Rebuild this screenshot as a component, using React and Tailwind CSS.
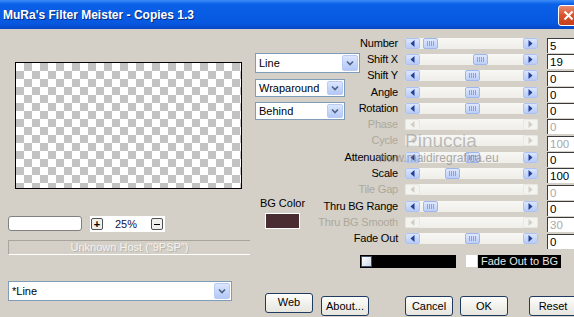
import React from 'react';

const rows = [
  { label: 'Number', value: '5', thumb: 18, row: 'row-start-1' },
  { label: 'Shift X', value: '19', thumb: 68, row: 'row-start-2' },
  { label: 'Shift Y', value: '0', thumb: 60, row: 'row-start-3' },
  { label: 'Angle', value: '0', thumb: 60, row: 'row-start-4' },
  { label: 'Rotation', value: '0', thumb: 60, row: 'row-start-5' },
  { label: 'Phase', value: '0', disabled: true, row: 'row-start-6' },
  { label: 'Cycle', value: '100', disabled: true, row: 'row-start-7' },
  { label: 'Attenuation', value: '0', thumb: 60, row: 'row-start-8' },
  { label: 'Scale', value: '100', thumb: 40, row: 'row-start-9' },
  { label: 'Tile Gap', value: '0', disabled: true, row: 'row-start-10' },
  { label: 'Thru BG Range', value: '0', thumb: 18, row: 'row-start-11' },
  { label: 'Thru BG Smooth', value: '30', disabled: true, row: 'row-start-12' },
  { label: 'Fade Out', value: '0', thumb: 60, row: 'row-start-13' },
];

const ArrowBtn = ({ dir, disabled }) => (
  <span
    className={`w-[15px] h-full rounded-[2px] border flex items-center justify-center ${
      disabled
        ? 'bg-[#f3f3ef] border-[#e8e7e1]'
        : 'bg-gradient-to-b from-[#dbe6fe] to-[#b7cbf7] border-[#aec3f1]'
    }`}
  >
    <svg width="5" height="7" viewBox="0 0 5 7">
      <path
        d={dir === 'left' ? 'M4.5 0 L0.5 3.5 L4.5 7 Z' : 'M0.5 0 L4.5 3.5 L0.5 7 Z'}
        fill={disabled ? '#cfcdc6' : '#243f94'}
      />
    </svg>
  </span>
);

const Slider = ({ thumb, disabled }) => (
  <div className="self-center h-[11px] flex bg-gradient-to-b from-[#f7f7f4] to-[#efeee9] rounded-[2px]">
    <ArrowBtn dir="left" disabled={disabled} />
    <div className="flex-1 flex">
      {!disabled && (
        <span
          className="w-[15px] h-full rounded-[2px] border border-[#9fb6ec] bg-gradient-to-b from-[#dfe8fe] to-[#bccff8] flex items-center justify-center gap-[1px]"
          style={{ marginLeft: thumb - 15 }}
        >
          <span className="w-[1px] h-[5px] bg-[#8aa1dd]" />
          <span className="w-[1px] h-[5px] bg-[#8aa1dd]" />
          <span className="w-[1px] h-[5px] bg-[#8aa1dd]" />
          <span className="w-[1px] h-[5px] bg-[#8aa1dd]" />
        </span>
      )}
    </div>
    <ArrowBtn dir="right" disabled={disabled} />
  </div>
);

const Dropdown = ({ text, className }) => (
  <div className={`flex items-center bg-white border border-[#7f9db9] ${className}`}>
    <span className="flex-1 pl-[3px] text-[11px] leading-none text-black">{text}</span>
    <span className="w-[16px] self-stretch m-[1px] rounded-[2px] bg-gradient-to-b from-[#dce6fe] to-[#b3c8f6] border border-[#b8cbf4] flex items-center justify-center">
      <svg width="8" height="6" viewBox="0 0 8 6">
        <path d="M1 1.5 L4 4.5 L7 1.5" fill="none" stroke="#4d6185" strokeWidth="1.6" />
      </svg>
    </span>
  </div>
);

const Button = ({ children }) => (
  <button className="w-[48px] h-[20px] rounded-[3px] border border-[#1f3b5f] bg-gradient-to-b from-[#fdfdfb] to-[#e6e5de] text-[11px] leading-none text-black">
    {children}
  </button>
);

export default function App() {
  return (
    <div className="relative w-[574px] h-[317px] overflow-hidden bg-[#d4d0c8] font-['Liberation_Sans',Arial,sans-serif] text-black">
      {/* Title bar */}
      <div className="h-[29px] flex justify-between bg-[linear-gradient(180deg,#3d8df8_0%,#0b60e8_14%,#0758e0_80%,#0648c6_100%)]">
        <span className="pl-[3px] pt-[8px] text-[12px] leading-[15px] font-bold text-white [text-shadow:1px_1px_0_#0b2a7a]">
          MuRa's Filter Meister - Copies 1.3
        </span>
        <span className="mt-[5px] mr-[-5px] w-[21px] h-[21px] rounded-[3px] border border-white bg-gradient-to-b from-[#e88a6c] via-[#d9512c] to-[#c5401c] flex items-center justify-center">
          <svg width="11" height="11" viewBox="0 0 11 11">
            <path d="M1.5 1.5 L9.5 9.5 M9.5 1.5 L1.5 9.5" stroke="white" strokeWidth="2" />
          </svg>
        </span>
      </div>

      <div className="flex">
        {/* Left panel */}
        <div className="w-[250px] flex flex-col">
          <div className="mt-[33px] ml-[15px] w-[227px] h-[127px] border border-black bg-[conic-gradient(#c3c3c3_25%,#ffffff_0_50%,#c3c3c3_0_75%,#ffffff_0)] bg-[length:16px_16px]" />

          <div className="mt-[27px] pl-[8px] flex items-start">
            <div className="w-[74px] h-[15px] bg-white border border-[#808080] rounded-[3px]" />
            <div className="ml-[8px] w-[75px] h-[16px] bg-white flex items-center">
              <span className="ml-[1px] w-[12px] h-[12px] rounded-[2px] border border-[#505050] bg-[#f1f0ec] flex items-center justify-center text-[11px] leading-none font-bold">
                +
              </span>
              <span className="ml-[12px] text-[11px] leading-none text-[#10104a]">25%</span>
              <span className="ml-[14px] w-[12px] h-[12px] rounded-[2px] border border-[#505050] bg-[#f1f0ec] flex items-center justify-center">
                <span className="w-[6px] h-[1px] bg-black" />
              </span>
            </div>
          </div>

          <div className="mt-[8px] ml-[8px] w-[242px] h-[15px] border-t border-l border-[#a9a59c] border-b border-b-white flex items-center justify-center text-[11px] leading-none text-[#f3f2ee] [text-shadow:1px_1px_0_#b9b5ad]">
            Unknown Host ("9PSP")
          </div>

          <Dropdown text="*Line" className="mt-[26px] ml-[8px] w-[224px] h-[20px]" />
        </div>

        {/* Right panel */}
        <div className="flex-1 flex flex-col pt-[6px]">
          <div className="grid grid-cols-[148px_133px_40px] grid-rows-[repeat(13,16.3px)] gap-x-[7px]">
            <div className="col-start-1 row-start-2 row-span-5 self-start mt-[2px] ml-[5px] flex flex-col">
              <Dropdown text="Line" className="w-[105px] h-[20px]" />
              <Dropdown text="Wraparound" className="mt-[6px] w-[90px] h-[18px]" />
              <Dropdown text="Behind" className="mt-[5px] w-[90px] h-[18px]" />
            </div>

            <div className="col-start-1 row-start-11 row-span-2 self-start -mt-[1px] ml-[12px] w-[41px] flex flex-col items-center">
              <span className="text-[11px] leading-[13px] whitespace-nowrap">BG Color</span>
              <span className="mt-[3px] w-[35px] h-[16px] border border-white bg-[#4a2c33]" />
            </div>

            {rows.map((r) => (
              <React.Fragment key={r.label}>
                <span
                  className={`col-start-1 ${r.row} self-center text-right text-[11px] leading-[13px] tracking-[-0.2px] ${
                    r.disabled ? 'text-[#aca899]' : 'text-black'
                  }`}
                >
                  {r.label}
                </span>
                <div className={`col-start-2 ${r.row} self-center`}>
                  <Slider thumb={r.thumb} disabled={r.disabled} />
                </div>
                <span
                  className={`col-start-3 ${r.row} self-start mt-[3px] ml-[2px] h-[15px] bg-white border-t border-l border-[#3a3a3a] pl-[2px] text-[11.5px] leading-[14px] ${
                    r.disabled ? 'text-[#a8a8a8]' : 'text-black'
                  }`}
                >
                  {r.value}
                </span>
              </React.Fragment>
            ))}
          </div>

          <div className="mt-[8px] pl-[110px] flex items-center">
            <div className="w-[96px] h-[13px] bg-black flex items-center">
              <span className="ml-[1px] w-[11px] h-[11px] border border-[#3c4d6a] bg-gradient-to-br from-white to-[#cfd8e6]" />
            </div>
            <span className="ml-[10px] w-[11px] h-[12px] bg-white" />
            <span className="ml-[1px] w-[83px] h-[13px] bg-black pl-[3px] text-[11px] leading-[13px] text-[#e8e8e8]">
              Fade Out to BG
            </span>
          </div>

          <div className="mt-[25px] pl-[15px] flex">
            <Button>Web</Button>
            <span className="ml-[8px]">
              <Button>About...</Button>
            </span>
            <span className="ml-[36px]">
              <Button>Cancel</Button>
            </span>
            <span className="ml-[7px]">
              <Button>OK</Button>
            </span>
            <span className="ml-[21px]">
              <Button>Reset</Button>
            </span>
          </div>
        </div>
      </div>

      {/* Watermark overlay */}
      <div className="absolute left-[378px] top-[131px] pointer-events-none flex flex-col opacity-70">
        <span className="ml-[27px] text-[19px] leading-[20px] text-[#a3a3a3] [text-shadow:0_0_1px_#ffffff]">Pinuccia</span>
        <span className="mt-[1px] text-[12px] leading-[13px] text-[#8a8a8a]">www.maidiregrafica.eu</span>
      </div>
    </div>
  );
}
